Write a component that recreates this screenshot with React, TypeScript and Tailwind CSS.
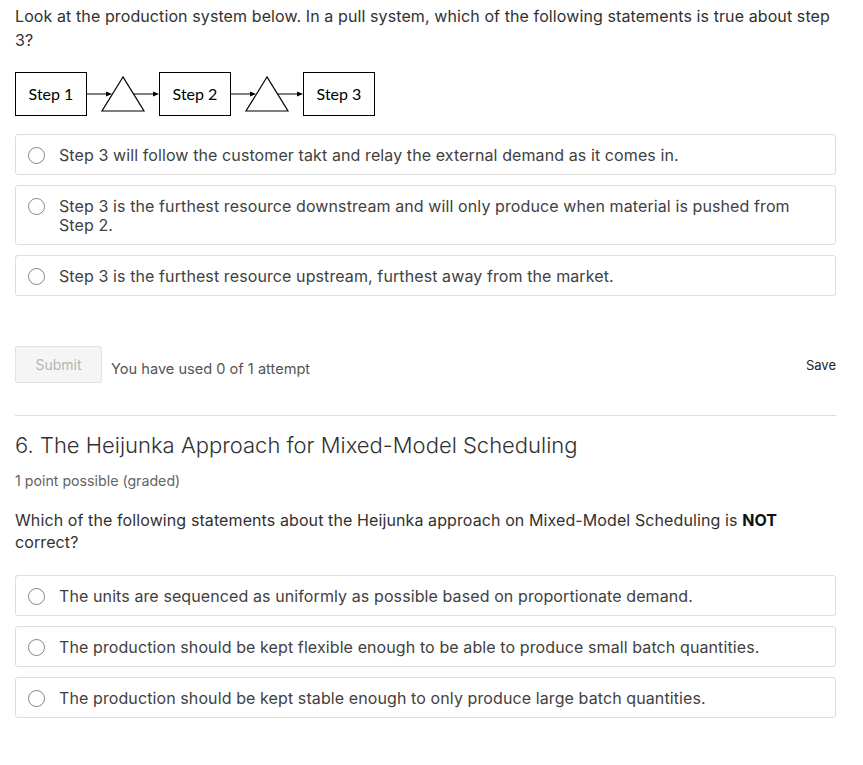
import React from "react";

function Connector() {
  return (
    <svg width="72" height="44" viewBox="0 0 72 44" className="block">
      <line x1="0" y1="22" x2="22" y2="22" stroke="#000" strokeWidth="1" />
      <polygon points="25,22 19,19.5 19,24.5" fill="#000" />
      <polygon points="36,5 15,39 57,39" fill="none" stroke="#000" strokeWidth="1.2" />
      <line x1="46" y1="22" x2="68" y2="22" stroke="#000" strokeWidth="1" />
      <polygon points="72,22 66,19.5 66,24.5" fill="#000" />
    </svg>
  );
}

function StepBox({ label }: { label: string }) {
  return (
    <div
      className="w-[72px] h-[44px] border border-[#000] flex items-center justify-center text-[16px] text-black"
      style={{ fontFamily: "Lato, 'Open Sans', sans-serif" }}
    >
      {label}
    </div>
  );
}

function Option({ children }: { children: React.ReactNode }) {
  return (
    <div className="flex items-start border border-[#dedede] rounded-[3px] pl-[12px] pr-[12px] pt-[10.5px] pb-[9.5px]">
      <span className="mt-[1px] shrink-0 w-[17px] h-[17px] rounded-full border border-[#858585] bg-white" />
      <span className="ml-[14px] text-[16px] tracking-[0.1px] leading-[19px] text-[#414141]">{children}</span>
    </div>
  );
}

export default function App() {
  return (
    <div
      className="w-[863px] bg-white pl-[15px] pr-[27px] pt-[4px] pb-[40px]"
      style={{ fontFamily: "Inter, 'Noto Sans', sans-serif" }}
    >
      <p className="text-[16px] tracking-[0.1px] leading-[24px] text-[#313131]">
        Look at the production system below. In a pull system, which of the following statements is true about step 3?
      </p>

      <div className="flex items-center mt-[20px]">
        <StepBox label="Step 1" />
        <Connector />
        <StepBox label="Step 2" />
        <Connector />
        <StepBox label="Step 3" />
      </div>

      <div className="flex flex-col gap-[10px] mt-[18px]">
        <Option>Step 3 will follow the customer takt and relay the external demand as it comes in.</Option>
        <Option>
          Step 3 is the furthest resource downstream and will only produce when material is pushed from Step 2.
        </Option>
        <Option>Step 3 is the furthest resource upstream, furthest away from the market.</Option>
      </div>

      <div className="flex items-center mt-[50px]">
        <button className="h-[37px] w-[87px] bg-[#f5f5f5] border border-[#e2e2e2] text-[#b4b4b4] text-[14px] rounded-[2px]">
          Submit
        </button>
        <span className="ml-[9px] mt-[11px] text-[14.6px] text-[#555555]">You have used 0 of 1 attempt</span>
        <span className="ml-auto text-[13px] text-[#222222] mt-[2px]">Save</span>
      </div>

      <hr className="mt-[32px] border-0 border-t border-[#dddddd]" />

      <h2 className="mt-[14px] text-[22px] leading-[30px] text-[#313131] font-light">
        6. The Heijunka Approach for Mixed-Model Scheduling
      </h2>

      <p className="mt-[11px] text-[14.2px] leading-[20px] text-[#646464]">1 point possible (graded)</p>

      <p className="mt-[18px] text-[16px] tracking-[0.1px] leading-[22px] text-[#313131]">
        Which of the following statements about the Heijunka approach on Mixed-Model Scheduling is{" "}
        <strong className="font-bold text-[#111]">NOT</strong> correct?
      </p>

      <div className="flex flex-col gap-[10px] mt-[22px]">
        <Option>The units are sequenced as uniformly as possible based on proportionate demand.</Option>
        <Option>The production should be kept flexible enough to be able to produce small batch quantities.</Option>
        <Option>The production should be kept stable enough to only produce large batch quantities.</Option>
      </div>
    </div>
  );
}
